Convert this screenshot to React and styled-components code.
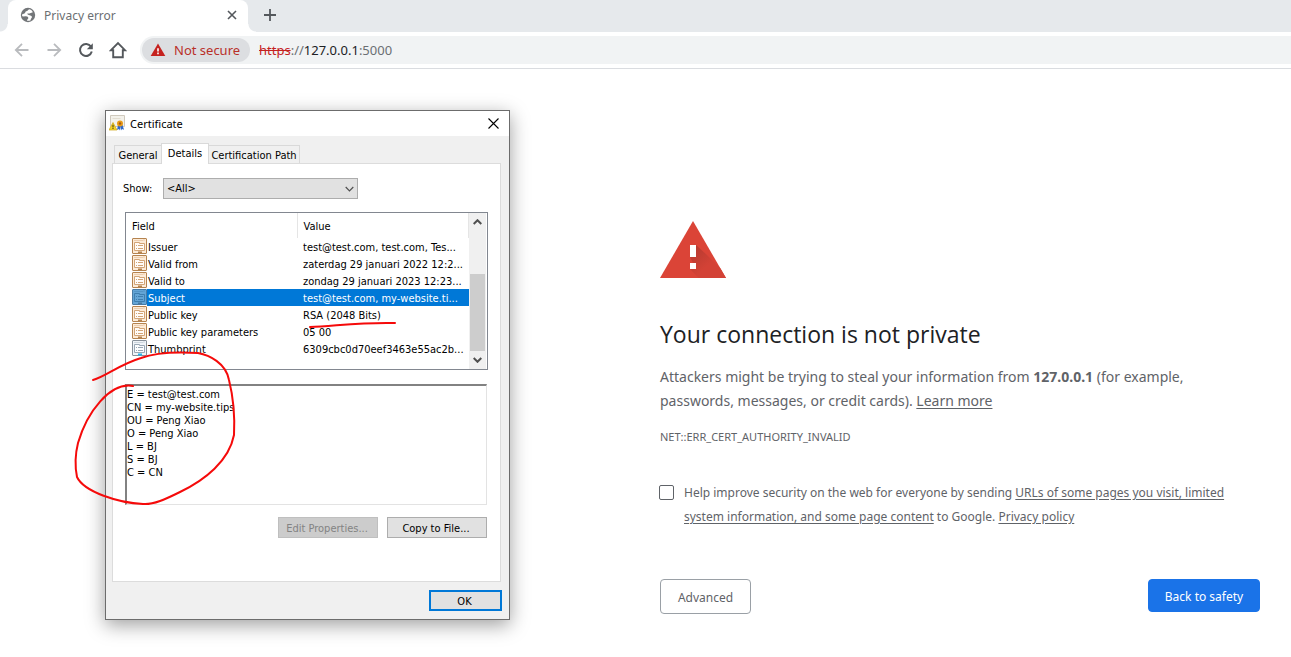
import React from "react";
import styled, { createGlobalStyle } from "styled-components";

const ui = `"Segoe UI", "Noto Sans", "Open Sans", sans-serif`;
const headingFont = `"Segoe UI", "Open Sans", "Noto Sans", sans-serif`;
const dialogFont = `Tahoma, "DejaVu Sans Condensed", "DejaVu Sans", sans-serif`;

const GlobalStyle = createGlobalStyle`
  *, *::before, *::after { box-sizing: border-box; }
  body { margin: 0; background: #fff; font-family: ${ui}; }
  button, input, select, textarea { font-family: inherit; }
`;

const Browser = styled.div`
  display: flex;
  flex-direction: column;
  min-height: 100vh;
  overflow: hidden;
`;

const TabStrip = styled.header`
  display: flex;
  align-items: stretch;
  height: 32px;
  padding-left: 8px;
  background: #e6e9ec;
`;

const BrowserTab = styled.div`
  position: relative;
  display: flex;
  align-items: center;
  gap: 8px;
  width: 240px;
  padding: 0 8px 2px 12px;
  border-radius: 8px 8px 0 0;
  background: #fff;
  font-size: 12px;
  &::before, &::after {
    content: "";
    position: absolute;
    bottom: 0;
    width: 8px;
    height: 8px;
  }
  &::before {
    right: 100%;
    background: radial-gradient(circle at 0 0, transparent 7px, #fff 8px);
  }
  &::after {
    left: 100%;
    background: radial-gradient(circle at 100% 0, transparent 7px, #fff 8px);
  }
`;

const TabTitle = styled.span`
  flex: 1;
  color: #6b6f73;
`;

const IconButton = styled.button`
  display: grid;
  place-items: center;
  flex: none;
  width: ${(p) => p.$size || 32}px;
  height: ${(p) => p.$size || 32}px;
  padding: 0;
  border: 0;
  background: transparent;
  color: ${(p) => p.$color || "#54585c"};
`;

const NewTab = styled(IconButton)`
  margin: 0 0 0 6px;
  height: 30px;
`;

const Toolbar = styled.nav`
  display: flex;
  align-items: center;
  height: 37px;
  padding-left: 6px;
  border-bottom: 1px solid #dadce0;
  background: #fff;
`;

const Omnibox = styled.div`
  display: flex;
  align-items: center;
  flex: 1;
  gap: 9px;
  height: 28px;
  margin-left: 6px;
  padding: 2px;
  border-radius: 14px 0 0 14px;
  background: #f1f3f4;
  font-size: 13px;
`;

const SecurityChip = styled.button`
  display: flex;
  align-items: center;
  gap: 8px;
  height: 24px;
  width: 108px;
  padding: 0 0 0 8px;
  border: 0;
  border-radius: 12px;
  background: #dcdee1;
  color: #b93029;
  font-size: 13px;
  white-space: nowrap;
`;

const Address = styled.div`
  color: #202124;
  outline: none;
  s { color: #c5221f; }
  span { color: #6b6f73; }
`;

const Page = styled.main`
  position: relative;
  flex: 1;
  padding: 152px 31px 40px;
`;

const Warning = styled.section`
  max-width: 600px;
  margin-left: auto;
  color: #5f6368;
`;

const WarningIcon = styled.svg`
  display: block;
  width: 66px;
  height: 57px;
`;

const Heading = styled.h1`
  margin: 40px 0 0;
  color: #202124;
  font-family: ${headingFont};
  font-size: 23px;
  font-weight: 400;
  line-height: 32px;
`;

const Message = styled.p`
  margin: 15px 0 0;
  font-size: 14px;
  line-height: 24px;
`;

const ErrorCode = styled.p`
  margin: 16px 0 0;
  font-size: 11px;
  line-height: 16px;
`;

const TextLink = styled.a`
  color: inherit;
  text-decoration: underline;
  text-underline-offset: 2px;
`;

const OptIn = styled.div`
  display: flex;
  gap: 10px;
  margin-top: 36px;
  margin-left: -1px;
  font-size: 12px;
  line-height: 24px;
`;

const CheckBox = styled.input`
  appearance: none;
  flex: none;
  width: 15px;
  height: 15px;
  margin: 4px 0 0;
  border: 1px solid #5f6368;
  border-radius: 2px;
  background: #fff;
`;

const Actions = styled.div`
  display: flex;
  align-items: flex-start;
  justify-content: space-between;
  margin-top: 50px;
`;

const ActionButton = styled.button`
  height: ${(p) => (p.$primary ? 33 : 35)}px;
  padding: 2px 14px 0;
  border: 1px solid ${(p) => (p.$primary ? "#1a73e8" : "#9aa0a6")};
  border-radius: 4px;
  background: ${(p) => (p.$primary ? "#1a73e8" : "#fff")};
  color: ${(p) => (p.$primary ? "#fff" : "#5f6368")};
  font-size: 12px;
  min-width: ${(p) => (p.$primary ? 112 : 91)}px;
`;

const Dialog = styled.div`
  position: absolute;
  left: 105px;
  top: 41px;
  display: flex;
  flex-direction: column;
  width: 405px;
  border: 1px solid #6c6c6c;
  background: #f0f0f0;
  box-shadow: 0 5px 18px rgba(0, 0, 0, 0.38);
  color: #000;
  font-family: ${dialogFont};
  font-size: 11px;
`;

const TitleBar = styled.div`
  display: flex;
  align-items: center;
  gap: 5px;
  height: 25px;
  padding: 0 1px 1px 3px;
  background: #fff;
  font-family: ${ui};
`;

const DialogTitle = styled.span`
  flex: 1;
  font-size: 11px;
`;

const DialogBody = styled.div`
  padding: 7px 8px 8px 6px;
`;

const TabList = styled.div`
  display: flex;
  align-items: flex-end;
  padding-left: 2px;
`;

const DialogTab = styled.button`
  position: relative;
  z-index: ${(p) => (p.$active ? 1 : 0)};
  width: ${(p) => p.$width}px;
  height: ${(p) => (p.$active ? 21 : 18)}px;
  margin-left: -1px;
  margin-bottom: ${(p) => (p.$active ? -1 : 0)}px;
  padding: ${(p) => (p.$active ? "0 0 2px" : "2px 0 0")};
  border: 1px solid #d9d9d9;
  border-bottom: 0;
  background: ${(p) => (p.$active ? "#fff" : "#f0f0f0")};
  color: #000;
  font-size: 11px;
  white-space: nowrap;
  &:first-child { margin-left: 0; }
`;

const TabPanel = styled.div`
  display: flex;
  flex-direction: column;
  padding: 14px 12px 43px 12px;
  border: 1px solid #dcdcdc;
  background: #fff;
`;

const ShowRow = styled.div`
  display: flex;
  align-items: center;
  label { width: 38px; margin-left: -2px; }
`;

const SelectWrap = styled.div`
  display: grid;
  align-items: center;
  width: 195px;
  margin-left: 2px;
  & > * { grid-area: 1 / 1; }
  svg { justify-self: end; margin-right: 4px; pointer-events: none; }
`;

const Select = styled.select`
  appearance: none;
  width: 100%;
  height: 21px;
  padding: 0 3px;
  border: 1px solid #adadad;
  border-radius: 0;
  background: #e1e1e1;
  color: #000;
  font-size: 11px;
`;

const ListBox = styled.div`
  display: flex;
  height: 158px;
  margin-top: 13px;
  border: 1px solid #828790;
`;

const FieldTable = styled.table`
  flex: 1;
  align-self: flex-start;
  width: 343px;
  border-collapse: collapse;
  table-layout: fixed;
  white-space: nowrap;
  th {
    height: 25px;
    padding: 2px 6px 0;
    border-right: 1px solid #e5e5e5;
    font-weight: 400;
    text-align: left;
  }
  th:first-child { width: 171px; }
`;

const FieldRow = styled.tr`
  height: 17px;
  td { padding: 0; line-height: 15px; }
  td:last-child {
    padding: 2px 0 0 6px;
    overflow: hidden;
  }
  color: ${(p) => (p.$selected ? "#fff" : "#000")};
  background: ${(p) => (p.$selected ? "#0078d7" : "transparent")};
`;

const FieldName = styled.div`
  display: flex;
  align-items: flex-end;
  gap: 1px;
  height: 17px;
  padding-left: 6px;
`;

const IconCell = styled.span`
  display: flex;
  margin-left: -6px;
  padding-left: 6px;
  background: #fff;
`;

const ScrollTrack = styled.div`
  display: flex;
  flex-direction: column;
  flex: none;
  width: 17px;
  margin: 0 1px 0 auto;
  background: #f0f0f0;
`;

const ScrollThumb = styled.div`
  height: 77px;
  margin: auto 1px 0;
  background: #cdcdcd;
`;

const ScrollButton = styled(IconButton)`
  width: 17px;
  height: 18px;
`;

const Details = styled.textarea`
  display: block;
  height: 121px;
  margin: 14px 1px 0 0;
  padding: 2px 0 0 0;
  border: 1px solid #e3e3e3;
  border-top: 2px solid #828282;
  border-left: 2px solid #828282;
  border-radius: 0;
  outline: 0;
  resize: none;
  overflow: hidden;
  background: #fff;
  color: #000;
  font-size: 11px;
  line-height: 13px;
`;

const ButtonRow = styled.div`
  display: flex;
  justify-content: flex-end;
  gap: 9px;
  margin-top: ${(p) => p.$top}px;
  padding-right: 1px;
`;

const DialogButton = styled.button`
  width: ${(p) => p.$width || 100}px;
  height: 21px;
  padding: 2px 2px 0 0;
  border: ${(p) => (p.$default ? "2px solid #0078d7" : "1px solid #adadad")};
  background: #e1e1e1;
  color: #000;
  font-size: 11px;
  line-height: 15px;
  &:disabled {
    border-color: #bfbfbf;
    background: #ccc;
    color: #838383;
  }
`;

const OkRow = styled(ButtonRow)`
  margin-right: -2px;
`;

const Annotation = styled.svg`
  position: absolute;
  left: -36px;
  top: 204px;
  width: 330px;
  height: 200px;
  fill: none;
  stroke: #f50a0a;
  stroke-width: 2;
  stroke-linecap: round;
  pointer-events: none;
`;

const Chevron = ({ up, color = "#505050", bold }) => (
  <svg width="9" height="6" viewBox="0 0 9 6" fill="none" stroke={color} strokeWidth={bold ? 2 : 1.2}>
    <path d={up ? "M.7 5 4.5 1.2 8.3 5" : "M.7 1 4.5 4.8 8.3 1"} />
  </svg>
);

const GlobeIcon = () => (
  <svg width="16" height="16" viewBox="0 0 16 16">
    <circle cx="8" cy="8" r="7.2" fill="#737679" />
    <path d="M9.600 2.200C7.500 2.700 7.800 4 6.300 4.300 5.200 4.600 5.400 5.700 4.800 6.300L2 7.600C1.900 8.600 2.300 9.200 2.700 9.500L6 9.300C7.300 9.400 8.600 10.100 8.300 11.200 8.100 12 7.100 12 7 13.700 7.900 14 9.400 13.800 10.300 13.400 11 12.700 10.500 11.800 11.400 11.200 12.300 10.500 12 9.200 11 8.800 9.800 8.500 9.500 7.700 8 7.700L7.200 6.700C8 6.200 9.300 7 10 6.300L12.900 5.200C12.200 3.700 11 2.600 9.600 2.200Z" fill="#fff" />
  </svg>
);

const NavArrow = ({ forward }) => (
  <svg width="16" height="16" viewBox="0 0 16 16" fill="none" stroke="currentColor" strokeWidth="1.8">
    <path d={forward ? "M1.5 8h12M8 1.8 14.2 8 8 14.2" : "M14.5 8h-12M8 1.8 1.8 8 8 14.2"} />
  </svg>
);

const ReloadIcon = () => (
  <svg width="16" height="16" viewBox="0 0 16 16">
    <path d="M13 4.6A6 6 0 1 0 13.8 9.6" fill="none" stroke="currentColor" strokeWidth="2" />
    <path d="M14.8 1.2v6H8.8z" fill="currentColor" />
  </svg>
);

const HomeIcon = () => (
  <svg width="18" height="18" viewBox="0 0 18 18" fill="none" stroke="currentColor" strokeWidth="1.9">
    <path d="M2 9.200 9 2l7 7.200h-2.200v7H4.200v-7z" />
  </svg>
);

const ChipWarning = () => (
  <svg width="16" height="14" viewBox="0 0 16 14">
    <path d="M8 .5 15.3 13H.7z" fill="#c5221f" />
    <path d="M7.2 5.2h1.6v3.2H7.2zM7.2 9.6h1.6v1.6H7.2z" fill="#fff" />
  </svg>
);

const CertificateIcon = () => (
  <svg width="16" height="16" viewBox="0 0 16 16">
    <path d="M1.500.5h14v11h-14z" fill="#f3f1ea" stroke="#cfc9bd" />
    <path d="M3.500 3.500h8" stroke="#e2ddd0" />
    <path d="m9 10-1 5 2-1 1 1.500V11l1 4.500 1-1.500 2 .8-1.500-4.800z" fill="#2e68c8" />
    <circle cx="11" cy="8.500" r="3" fill="#e99b16" />
    <circle cx="11" cy="8.500" r="1.200" fill="#a85a12" />
    <path d="M4 7.500 8 15H0z" fill="#f5d329" stroke="#cda513" strokeWidth=".7" />
    <path d="M3.500 9.800h1v2.600h-1zM3.500 13h1v1h-1z" fill="#3c3508" />
  </svg>
);

const palettes = {
  tan: ["#b5834f", "#fdebd7", "#d3a577"],
  blue: ["#4a7ba3", "#63a5d6", "#3f7fb0"],
  gray: ["#87909a", "#f0f4f8", "#9aa8b6"],
};

const PropertyIcon = ({ tone }) => {
  const [edge, fill, ink] = palettes[tone];
  return (
    <svg width="15" height="17" viewBox="0 0 15 17">
      <rect x=".5" y=".5" width="14" height="15" rx=".5" fill={fill} stroke={edge} />
      <path d="M2 2.500h9M12 1v2" stroke={ink} opacity=".4" />
      <path d="M2.500 12.500v-8h5v1h5v7z" fill="#fff" fillOpacity={tone === "blue" ? 0 : 0.8} stroke={ink} />
      <path d="M4 7.500h1M6 7.500h5M4 10.500h1M6 10.500h5" stroke={ink} />
      <path d="M6 14.500h4" stroke={tone === "gray" ? "#27b5ea" : edge} strokeWidth="2" />
    </svg>
  );
};

const fields = [
  ["Issuer", "test@test.com, test.com, Tes...", "tan"],
  ["Valid from", "zaterdag 29 januari 2022 12:2...", "tan"],
  ["Valid to", "zondag 29 januari 2023 12:23...", "tan"],
  ["Subject", "test@test.com, my-website.ti...", "blue"],
  ["Public key", "RSA (2048 Bits)", "tan"],
  ["Public key parameters", "05 00", "tan"],
  ["Thumbprint", "6309cbc0d70eef3463e55ac2b...", "gray"],
];

const subject = [
  "E = test@test.com",
  "CN = my-website.tips",
  "OU = Peng Xiao",
  "O = Peng Xiao",
  "L = BJ",
  "S = BJ",
  "C = CN",
].join("\n");

function CertificateDialog() {
  return (
    <Dialog role="dialog" aria-labelledby="certificate-title">
      <TitleBar>
        <CertificateIcon />
        <DialogTitle id="certificate-title">Certificate</DialogTitle>
        <IconButton $size={30} $color="#000" aria-label="Close">
          <svg width="11" height="11" viewBox="0 0 11 11" stroke="currentColor" strokeWidth="1.1">
            <path d="m.5.5 10 10m0-10-10 10" />
          </svg>
        </IconButton>
      </TitleBar>
      <DialogBody>
        <TabList role="tablist">
          <DialogTab role="tab" $width={48}>General</DialogTab>
          <DialogTab role="tab" $width={48} $active aria-selected="true">Details</DialogTab>
          <DialogTab role="tab" $width={92}>Certification Path</DialogTab>
        </TabList>
        <TabPanel role="tabpanel">
          <ShowRow>
            <label htmlFor="show">Show:</label>
            <SelectWrap>
              <Select id="show" defaultValue="all">
                <option value="all">&lt;All&gt;</option>
              </Select>
              <Chevron />
            </SelectWrap>
          </ShowRow>
          <ListBox>
            <FieldTable>
              <thead>
                <tr>
                  <th>Field</th>
                  <th>Value</th>
                </tr>
              </thead>
              <tbody>
                {fields.map(([name, value, tone]) => (
                  <FieldRow key={name} $selected={name === "Subject"}>
                    <td>
                      <FieldName>
                        <IconCell><PropertyIcon tone={tone} /></IconCell>
                        {name}
                      </FieldName>
                    </td>
                    <td>{value}</td>
                  </FieldRow>
                ))}
              </tbody>
            </FieldTable>
            <ScrollTrack>
              <ScrollButton aria-label="Scroll up"><Chevron up bold /></ScrollButton>
              <ScrollThumb />
              <ScrollButton aria-label="Scroll down"><Chevron bold /></ScrollButton>
            </ScrollTrack>
          </ListBox>
          <Details readOnly aria-label="Field value" value={subject} />
          <ButtonRow $top={12}>
            <DialogButton disabled>Edit Properties...</DialogButton>
            <DialogButton>Copy to File...</DialogButton>
          </ButtonRow>
        </TabPanel>
        <OkRow $top={8}>
          <DialogButton $default $width={73}>OK</DialogButton>
        </OkRow>
      </DialogBody>
      <Annotation viewBox="70 315 330 200" aria-hidden="true">
        <path d="M310 327 C335 326 362 322 395 323" />
        <path d="M93 380 C107 376 118 365 141 358 C157 352 181 352 198 353 C209 355 226 363 229 380 C234 400 235 415 234 435 C229 461 205 480 180 492 C166 499 153 505 143 504 C119 503 84 492 77 477 C75 467 75 455 78 443 C87 412 110 382 133 386" />
      </Annotation>
    </Dialog>
  );
}

export default function App() {
  return (
    <Browser>
      <GlobalStyle />
      <TabStrip>
        <BrowserTab>
          <GlobeIcon />
          <TabTitle>Privacy error</TabTitle>
          <IconButton $size={16} aria-label="Close tab">
            <svg width="10" height="10" viewBox="0 0 10 10" stroke="currentColor" strokeWidth="1.6">
              <path d="m1 1 8 8m0-8-8 8" />
            </svg>
          </IconButton>
        </BrowserTab>
        <NewTab aria-label="New tab">
          <svg width="12" height="12" viewBox="0 0 12 12" stroke="currentColor" strokeWidth="1.8">
            <path d="M6 0v12M0 6h12" />
          </svg>
        </NewTab>
      </TabStrip>
      <Toolbar>
        <IconButton $color="#b9bbbe" aria-label="Back"><NavArrow /></IconButton>
        <IconButton $color="#b9bbbe" aria-label="Forward"><NavArrow forward /></IconButton>
        <IconButton aria-label="Reload"><ReloadIcon /></IconButton>
        <IconButton aria-label="Home"><HomeIcon /></IconButton>
        <Omnibox>
          <SecurityChip><ChipWarning />Not secure</SecurityChip>
          <Address role="textbox" aria-label="Address" tabIndex={0}>
            <s>https</s><span>://</span>127.0.0.1<span>:5000</span>
          </Address>
        </Omnibox>
      </Toolbar>
      <Page>
        <Warning>
          <WarningIcon viewBox="0 0 66 57">
            <defs>
              <linearGradient id="shade" gradientUnits="userSpaceOnUse" x1="31" y1="27" x2="47" y2="45">
                <stop stopColor="#b53a30" />
                <stop offset="1" stopColor="#d34236" />
              </linearGradient>
            </defs>
            <path d="M33 0 66 57H0z" fill="#db4437" />
            <path d="M36 24 47 34 60.500 47.500 66 57H38.500L30 48l3-6-3-6z" fill="url(#shade)" />
            <path d="M30 24h6v12h-6zM30 42h6v6h-6z" fill="#fff" />
          </WarningIcon>
          <Heading>Your connection is not private</Heading>
          <Message>
            Attackers might be trying to steal your information from <strong>127.0.0.1</strong> (for
            example, passwords, messages, or credit cards). <TextLink href="#learn">Learn more</TextLink>
          </Message>
          <ErrorCode>NET::ERR_CERT_AUTHORITY_INVALID</ErrorCode>
          <OptIn>
            <CheckBox type="checkbox" id="opt-in" />
            <label htmlFor="opt-in">
              Help improve security on the web for everyone by sending{" "}
              <TextLink href="#data">
                URLs of some pages you visit, limited system information, and some page content
              </TextLink>{" "}
              to Google. <TextLink href="#privacy">Privacy policy</TextLink>
            </label>
          </OptIn>
          <Actions>
            <ActionButton>Advanced</ActionButton>
            <ActionButton $primary>Back to safety</ActionButton>
          </Actions>
        </Warning>
        <CertificateDialog />
      </Page>
    </Browser>
  );
}
